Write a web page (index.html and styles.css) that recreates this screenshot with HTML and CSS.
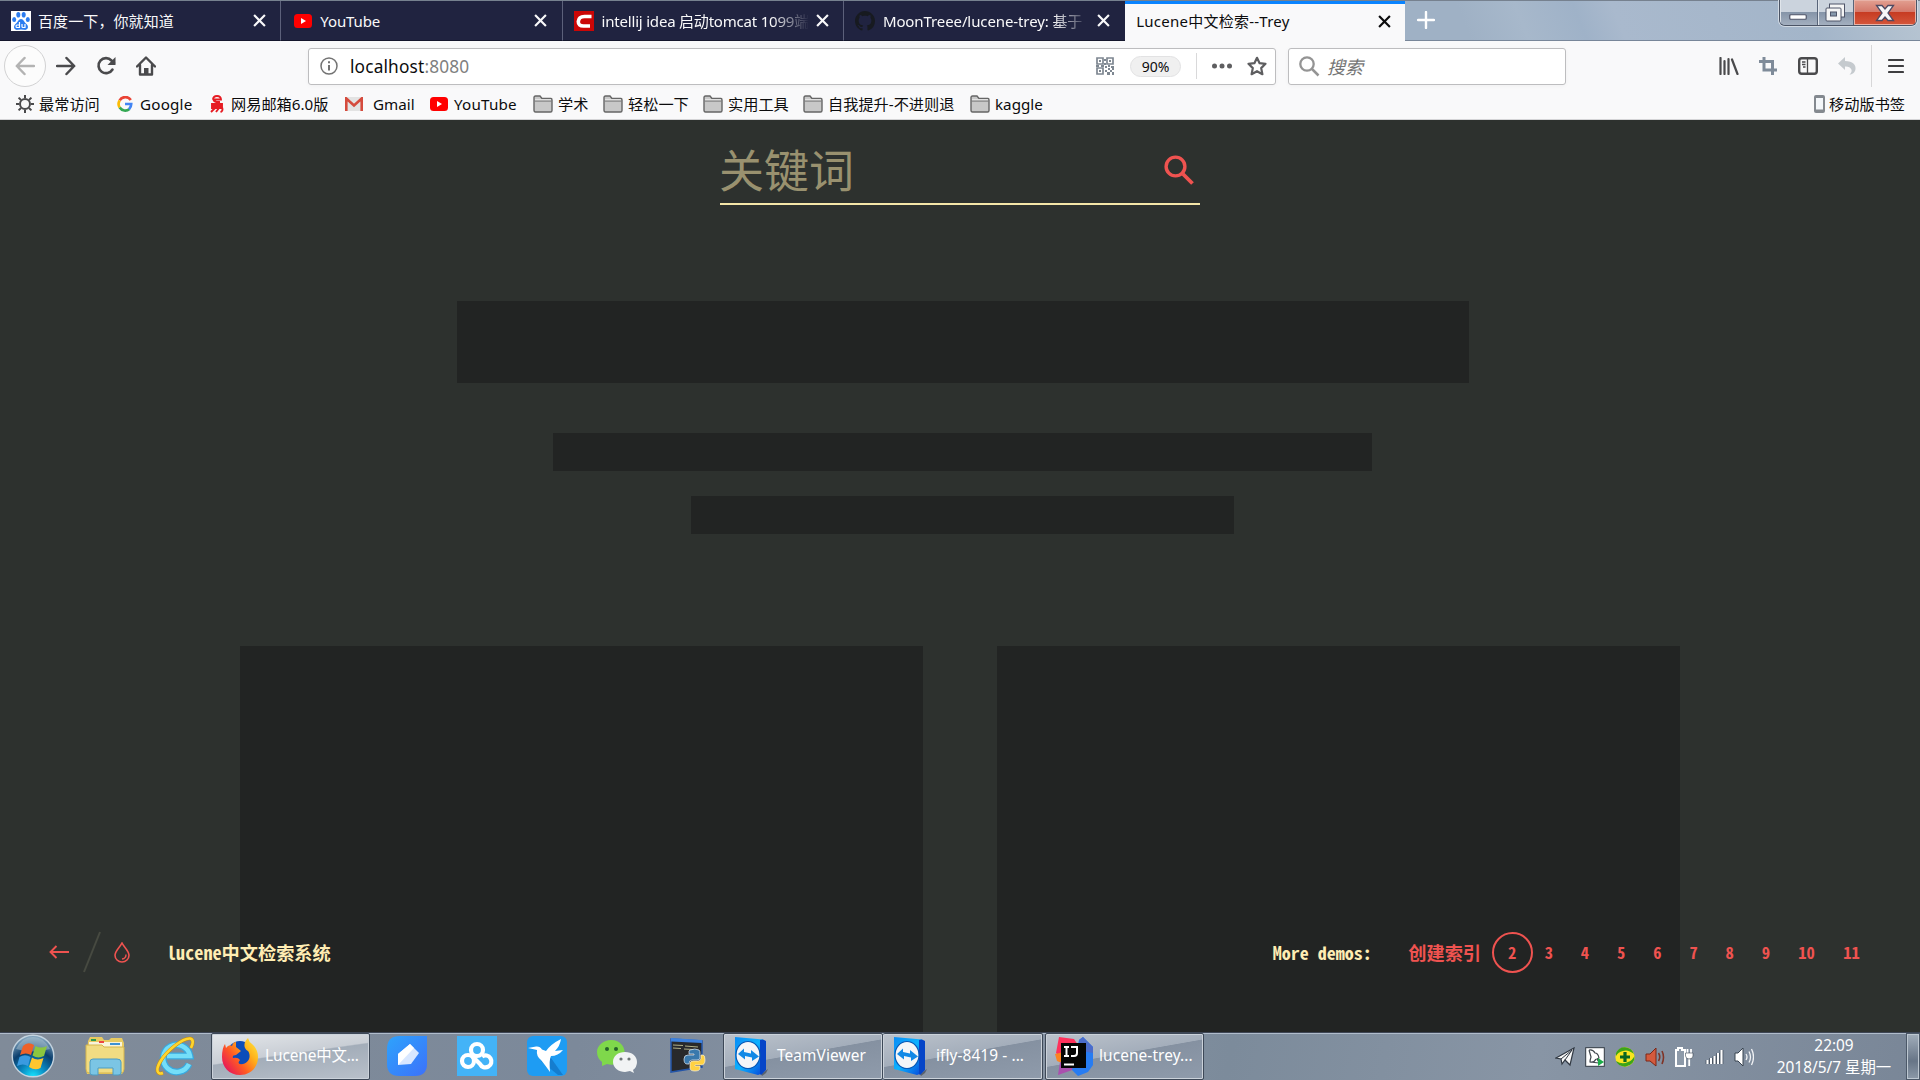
FILE: index.html
```html
<!DOCTYPE html>
<html lang="zh-CN">
<head>
<meta charset="utf-8">
<title>Lucene中文检索--Trey</title>
<link rel="stylesheet" href="styles.css">
</head>
<body>
<svg class="defs" width="0" height="0" aria-hidden="true">
  <defs>
    <symbol id="close" viewBox="0 0 12 12"><path d="M1 1L11 11M11 1L1 11" stroke="currentColor" stroke-width="2" fill="none"/></symbol>
    <symbol id="youtube" viewBox="0 0 18 14"><rect width="18" height="14" rx="3.5" fill="#f00"/><path d="M7 4L12 7L7 10Z" fill="#fff"/></symbol>
    <symbol id="folder" viewBox="0 0 20 18"><path d="M1 15V2.5Q1 1 2.500 1H7L9 3.500H18Q19 3.500 19 5V15.500Q19 17 17.500 17H2.500Q1 17 1 15Z" fill="#c8c8c8" stroke="#666" stroke-width="1.400"/><path d="M1.500 6H18.500" stroke="#777" stroke-width="1.200"/><path d="M2 4.700H18" stroke="#e6e6e6" stroke-width="1.200"/></symbol>
    <linearGradient id="tvSide" x1="0" y1="0" x2="1" y2="1"><stop offset="0" stop-color="#0a8df5"/><stop offset=".5" stop-color="#0cb2ff"/><stop offset="1" stop-color="#0646d8"/></linearGradient>
    <symbol id="teamviewer" viewBox="0 0 36 40"><path d="M27 38L34 33L32 37L28 40Z" fill="#3b4149" opacity=".6"/><path d="M1 1L29 3.500V37L24 39L1 33Z" fill="url(#tvSide)"/><path d="M29 3.500L32 5V34L27 39L26 38V4Z" fill="#0645c8"/><ellipse cx="14" cy="19" rx="12" ry="13.500" fill="#f4f6f8" stroke="#0758b5" stroke-width="1.200"/><path d="M4 18L10 12.500V16L17 17.500V14L25 20.500L18 25V21.500L11 20V23.500Z" fill="#1189e6"/></symbol>
  </defs>
</svg>

<header class="browser">
  <div class="tabstrip">
    <div class="tab first">
      <svg class="favicon" viewBox="0 0 20 20"><rect width="20" height="20" fill="#fff"/><g fill="#2b7cf0"><ellipse cx="7.300" cy="3.800" rx="2" ry="2.800"/><ellipse cx="12.700" cy="3.800" rx="2" ry="2.800"/><ellipse cx="3.200" cy="8.500" rx="2" ry="2.600"/><ellipse cx="16.800" cy="8.500" rx="2" ry="2.600"/><path d="M10 8C7.500 8 7 11 4.500 13C1.500 16 3.500 19.500 7 18.800Q10 18.300 13 18.800C16.500 19.500 18.500 16 15.500 13C13 11 12.500 8 10 8Z"/></g><path d="M8.500 11V16.500H6Q5 16.500 5 15.200Q5 14 6 14H8.500M11 13V15.500Q11 16.500 12 16.500H14V13" stroke="#fff" stroke-width="1.200" fill="none"/></svg>
      <span class="title">百度一下，你就知道</span><svg class="x"><use href="#close"/></svg>
    </div>
    <div class="tab">
      <svg class="favicon yt"><use href="#youtube"/></svg>
      <span class="title">YouTube</span><svg class="x"><use href="#close"/></svg>
    </div>
    <div class="tab">
      <svg class="favicon" viewBox="0 0 20 20"><rect width="20" height="20" fill="#cb0606"/><path d="M17.500 5.500H10.500Q4.700 5.500 4.300 10.500Q4.200 15 9.500 15H16" stroke="#fff" stroke-width="3.600" fill="none"/></svg>
      <span class="title fade csdn">intellij idea 启动tomcat 1099端</span><svg class="x"><use href="#close"/></svg>
    </div>
    <div class="tab">
      <svg class="favicon" viewBox="0 0 16 16"><path fill="#171a20" d="M8 0C3.580 0 0 3.580 0 8c0 3.540 2.290 6.530 5.470 7.590.4.070.55-.17.55-.38 0-.19-.01-.82-.01-1.490-2.010.37-2.530-.49-2.690-.94-.09-.23-.48-.94-.82-1.130-.28-.15-.68-.52-.01-.53.63-.01 1.080.58 1.230.82.720 1.210 1.870.87 2.330.66.070-.52.280-.87.510-1.070-1.780-.2-3.640-.89-3.640-3.950 0-.87.310-1.590.82-2.150-.08-.2-.36-1.020.08-2.120 0 0 .67-.21 2.200.82.640-.18 1.320-.27 2-.27s1.360.09 2 .27c1.530-1.040 2.200-.82 2.200-.82.440 1.100.160 1.920.080 2.120.51.560.82 1.270.82 2.150 0 3.070-1.870 3.750-3.650 3.950.29.250.54.730.54 1.480 0 1.070-.01 1.930-.01 2.200 0 .21.150.46.550.38A8.010 8.010 0 0 0 16 8c0-4.420-3.580-8-8-8z"/></svg>
      <span class="title fade">MoonTreee/lucene-trey: 基于</span><svg class="x"><use href="#close"/></svg>
    </div>
    <div class="tab active"><span class="title">Lucene中文检索--Trey</span><svg class="x"><use href="#close"/></svg></div>
    <svg class="newtab" viewBox="0 0 18 18"><path d="M9 1V17M1 9H17" stroke="#fff" stroke-width="2.400" stroke-linecap="round"/></svg>
    <div class="winbtns">
      <span class="wb min"><svg width="18" height="7"><rect x=".75" y=".75" width="16.500" height="4.500" rx="1" fill="#fff" stroke="#4f5468" stroke-width="1.200"/></svg></span>
      <span class="wb max"><svg width="21" height="19" viewBox="0 0 21 19"><rect x="4.500" y="1" width="15" height="13" fill="#f5f5f5" stroke="#4f5468"/><rect x="1" y="5" width="15" height="13" rx="1" fill="#f5f5f5" stroke="#4f5468"/><rect x="5.500" y="9" width="6" height="4" fill="#8698ab" stroke="#4f5468"/></svg></span>
      <span class="wb cls"><svg width="20" height="18" viewBox="0 0 20 18"><path d="M1.500 1.500H7L10 5L13 1.500H18.500L13 9L18.500 16.500H13L10 13L7 16.500H1.500L7 9Z" fill="#f7f7f7" stroke="#4e4a62" stroke-width="1.300"/></svg></span>
    </div>
  </div>

  <div class="toolbar">
    <span class="back"><svg width="20" height="20" viewBox="0 0 20 20"><path d="M19 10H2M9.500 2L1.800 10L9.500 18" stroke="#b3b3b3" stroke-width="2.500" fill="none" stroke-linecap="round" stroke-linejoin="round"/></svg></span>
    <svg class="nav fwd" viewBox="0 0 20 20"><path d="M1 10H18M10.500 2L18.200 10L10.500 18" stroke="#4a4a4c" stroke-width="2.500" fill="none" stroke-linecap="round" stroke-linejoin="round"/></svg>
    <svg class="nav reload" viewBox="0 0 20 20"><path d="M16.500 13.500A7.500 7.500 0 1 1 15.500 4.500L18 7" stroke="#4a4a4c" stroke-width="2.600" fill="none" stroke-linecap="round"/><path d="M19.500 1V9H11.500Z" fill="#4a4a4c"/></svg>
    <svg class="nav home" viewBox="0 0 20 20"><path d="M1 10.500L10 1.500L19 10.500M4 9V18.500H16V9" stroke="#4a4a4c" stroke-width="2.400" fill="none" stroke-linecap="round" stroke-linejoin="round"/><path d="M8 19V12H12.500V19Z" fill="#4a4a4c"/></svg>
    <div class="urlbar">
      <svg width="18" height="18" viewBox="0 0 18 18"><circle cx="9" cy="9" r="8" fill="none" stroke="#737373" stroke-width="1.500"/><path d="M9 8V13.500M9 4.300V6.300" stroke="#737373" stroke-width="2"/></svg>
      <span class="url">localhost<i>:8080</i></span>
      <svg class="qr" viewBox="0 0 18 18"><path d="M1 1H7V7H1ZM11 1H17V7H11ZM1 11H7V17H1Z" fill="none" stroke="#7e8791" stroke-width="1.700"/><path d="M3 3H5V5H3ZM13 3H15V5H13ZM3 13H5V15H3ZM8 2H10V4H8ZM8 6H10V8H8ZM0 8H3V10H0ZM5 8H8V10H5ZM9 9H11V11H9ZM12 8H14V10H12ZM15 9H18V11H15ZM9 13H11V15H9ZM12 11H14V13H12ZM14 13H16V15H14ZM16 11H18V13H16ZM11 15H14V18H11ZM16 15H18V18H16Z" fill="#7e8791"/></svg>
      <span class="zoom">90%</span><span class="usep"></span>
      <svg class="dots" viewBox="0 0 20 6"><circle cx="2.500" cy="3" r="2.500"/><circle cx="10" cy="3" r="2.500"/><circle cx="17.500" cy="3" r="2.500"/></svg>
      <svg class="star" viewBox="0 0 20 20"><path d="M10 1.800L12.600 7.200L18.500 7.800L14.200 12.100L15.400 18.200L10 15.200L4.600 18.200L5.800 12.100L1.500 7.800L7.400 7.200Z" fill="none" stroke="#5e5e60" stroke-width="2.200" stroke-linejoin="round"/></svg>
    </div>
    <div class="searchbar"><svg width="21" height="21" viewBox="0 0 21 21"><circle cx="8" cy="8" r="6.700" fill="none" stroke="#949494" stroke-width="2.300"/><path d="M13 13L19.500 19.500" stroke="#949494" stroke-width="2.500"/></svg><span>搜索</span></div>
    <div class="tools">
      <svg width="20" height="18" viewBox="0 0 20 18"><path d="M1.500 1V17M5.500 4V17M9.500 2V17M13 2.500L18.500 17" stroke="#4a4a4c" stroke-width="2.200" stroke-linecap="round"/></svg>
      <svg width="18" height="18" viewBox="0 0 18 18"><path d="M5 0V13H18M0 4.500H13.500V18" fill="none" stroke="#7f8b99" stroke-width="3"/></svg>
      <svg width="20" height="18" viewBox="0 0 20 18"><rect x="1.200" y="1.200" width="17.600" height="15.600" rx="2.500" fill="none" stroke="#4a4a4c" stroke-width="2.400"/><path d="M9.500 2V16M4 5H7.500M4 7.500H7.500M5 10H7.500" stroke="#4a4a4c" stroke-width="1.300"/></svg>
      <svg width="18" height="18" viewBox="0 0 18 18"><path d="M0 6.500L7 0V4C15 4 18 8 17.500 12C17 16 14 17.500 11.500 17.500C16 14 13 9 7 9.500V13Z" fill="#c5cace"/></svg>
    </div>
    <span class="tsep"></span>
    <svg class="burger" viewBox="0 0 16 16"><path d="M1 2H15M1 8H15M1 14H15" stroke="#3e3e40" stroke-width="2.200" stroke-linecap="round"/></svg>
  </div>

  <nav class="bookmarks">
    <a style="width:101px"><svg width="18" height="18" viewBox="0 0 18 18"><circle cx="9" cy="9" r="5" fill="none" stroke="#4a4a4c" stroke-width="2"/><path d="M9 0V3M9 15V18M0 9H3M15 9H18M2.600 2.600L5 5M13 13L15.400 15.400M15.400 2.600L13 5M5 13L2.600 15.400" stroke="#4a4a4c" stroke-width="2"/></svg><span>最常访问</span></a>
    <a style="width:92px"><svg width="16" height="16" viewBox="0 0 18 18"><path d="M15.500 4.500A7.300 7.300 0 0 0 3 5" stroke="#ea4335" stroke-width="3" fill="none"/><path d="M3 5A7.500 7.500 0 0 0 3 13" stroke="#fbbc05" stroke-width="3" fill="none"/><path d="M3 13A7.300 7.300 0 0 0 14 14.500" stroke="#34a853" stroke-width="3" fill="none"/><path d="M13.500 14.800Q16 12.500 16 9H9" stroke="#4285f4" stroke-width="3" fill="none"/></svg><span class="google">Google</span></a>
    <a style="width:136px"><svg width="16" height="18" viewBox="0 0 16 18"><path d="M4 4.500Q4 1 8 1Q12 1 12 4.500H4.500Q5 7.500 11 7M3 9H13V13H3ZM3 11H13M6 13L2 17M13 12Q14.500 16 11.500 17M10 13L7 17" fill="none" stroke="#e61c23" stroke-width="1.900"/></svg><span class="mail">网易邮箱6.0版</span></a>
    <a style="width:85px"><svg width="18" height="14" viewBox="0 0 18 14"><rect width="18" height="14" rx="1" fill="#e3e3e3"/><path d="M1.300 14V1.500L9 8.500L16.700 1.500V14" fill="none" stroke="#d54b3d" stroke-width="2.600"/></svg><span class="gm">Gmail</span></a>
    <a style="width:103px"><svg width="18" height="14"><use href="#youtube"/></svg><span class="ytb">YouTube</span></a>
    <a style="width:70px"><svg width="20" height="18"><use href="#folder"/></svg><span>学术</span></a>
    <a style="width:100px"><svg width="20" height="18"><use href="#folder"/></svg><span>轻松一下</span></a>
    <a style="width:100px"><svg width="20" height="18"><use href="#folder"/></svg><span>实用工具</span></a>
    <a style="width:167px"><svg width="20" height="18"><use href="#folder"/></svg><span>自我提升-不进则退</span></a>
    <a><svg width="20" height="18"><use href="#folder"/></svg><span>kaggle</span></a>
    <a class="mobile"><svg width="11" height="18" viewBox="0 0 11 18"><rect width="11" height="18" rx="2" fill="#84898f"/><rect x="2" y="3" width="7" height="11.500" fill="#f4f7fa"/></svg><span>移动版书签</span></a>
  </nav>
</header>

<main class="page">
  <div class="search"><span>关键词</span><svg width="30" height="30" viewBox="0 0 30 30"><circle cx="11.500" cy="11.500" r="9.400" fill="none" stroke="#ef5350" stroke-width="3.400"/><path d="M19 19L28.500 28.500" stroke="#ef5350" stroke-width="3.800"/></svg></div>
  <div class="bar b1"></div>
  <div class="bar b2"></div>
  <div class="bar b3"></div>
  <div class="panels"><div></div><div></div></div>
  <footer class="footer">
    <svg class="arrow" viewBox="0 0 20 14"><path d="M20 7H1.500M7.500 1L1.500 7L7.500 13" fill="none" stroke="#ef5350" stroke-width="1.900"/></svg>
    <svg class="slash" viewBox="0 0 18 42"><path d="M17 1L1 41" stroke="#474a41" stroke-width="2"/></svg>
    <svg class="drop" viewBox="0 0 16 21"><path d="M8 1C6 5 1 9 1 13.200A7 6.800 0 0 0 15 13.200C15 9 10 5 8 1Z" fill="none" stroke="#ef5350" stroke-width="1.600"/><path d="M12 12.500Q12 16.500 8 17" fill="none" stroke="#ef5350" stroke-width="1.400"/></svg>
    <h1>lucene中文检索系统</h1>
    <span class="more">More demos:</span>
    <nav class="demos"><a class="create">创建索引</a><a class="cur">2</a><a>3</a><a>4</a><a>5</a><a>6</a><a>7</a><a>8</a><a>9</a><a class="two">10</a><a class="two">11</a></nav>
  </footer>
</main>

<div class="taskbar">
  <svg class="orb" viewBox="0 0 44 44"><defs><radialGradient id="og" cx=".5" cy="1" r=".95"><stop offset="0" stop-color="#17e5ff"/><stop offset=".35" stop-color="#0a83bc"/><stop offset=".65" stop-color="#0b3f6e"/><stop offset="1" stop-color="#7fa2bb"/></radialGradient></defs><circle cx="22" cy="22" r="20.800" fill="url(#og)" stroke="#c3d3df" stroke-width="1.400"/><path d="M5 15Q11 3 22 3Q33 3 39 15Q22 20 5 15Z" fill="#b9cbd8" opacity=".45"/><path d="M12 12Q17 7 23 11L20 21Q15 18 9 21Z" fill="#ef6228"/><path d="M24.500 12Q30 15 36 12L33 22Q27 25 21.500 21.500Z" fill="#8cc63f"/><path d="M8.500 23Q14 19.500 19.500 23L17 32Q12 29 6 32Z" fill="#3a9ae0"/><path d="M21 23.500Q26 27 32.500 24L29.500 34Q24 37 18 33Z" fill="#fdc62f"/></svg>
  <svg class="explorer" viewBox="0 0 40 40"><path d="M3 5L5 1H17L19 4H24L26 2H37L39 7V35L37 38H2L1 34Z" fill="#e8cb62"/><path d="M4 6H37V12H4Z" fill="#f8f4dc"/><path d="M6 3H11V5H6Z" fill="#2a9a50"/><path d="M14 5H19V7H14Z" fill="#e44"/><path d="M25 7H35V9H25Z" fill="#3e92d5"/><path d="M1 9H17L19 11H39V33Q39 37 36 37H4Q1 37 1 33Z" fill="#f1dc82" stroke="#d6b54c"/><path d="M5 37V26Q5 23 8 23H32Q36 23 36 26V37Q36 39 33 39H28V32H13V39H8Q5 39 5 37Z" fill="#7bc5e4" stroke="#4d9cc3"/></svg>
  <svg class="ie" viewBox="0 0 40 40"><path d="M34 28A13.500 13.500 0 1 1 35 20H12" fill="none" stroke="#38a9df" stroke-width="7"/><path d="M34 28A13.500 13.500 0 1 1 35 20H12" fill="none" stroke="#74def9" stroke-width="4.500"/><path d="M8 37C2 39 .5 34 5 26C12 14 28 2 35 2.500C39 3 38 8 36 12" fill="none" stroke="#c98e08" stroke-width="3.600"/><path d="M8 37C2 39 .5 34 5 26C12 14 28 2 35 2.500C39 3 38 8 36 12" fill="none" stroke="#ffd52e" stroke-width="2.600"/></svg>
  <div class="task on">
    <svg width="38" height="38" viewBox="0 0 38 38"><defs><linearGradient id="fx" x1="1" y1="0" x2="0" y2=".8"><stop offset="0" stop-color="#fff044"/><stop offset=".35" stop-color="#ffb01b"/><stop offset=".65" stop-color="#ff5a24"/><stop offset="1" stop-color="#e3105f"/></linearGradient></defs><circle cx="19" cy="17" r="13" fill="#0d4dba"/><path d="M4 7L5 11Q8 7 11 9Q12 5 15 5L15 10L20 14L15 18Q11 18 12 21Q17 20 19 23Q15 28 22 27C29 25 30 18 27 14Q22 11 24 5Q25 3 27 1Q28 5 31 7Q37 12 37 20C37 31 29 38 19 38C8 38 1 30 1 20Q1 11 4 7Z" fill="url(#fx)"/></svg>
    <span>Lucene中文...</span>
  </div>
  <svg class="app a1" viewBox="0 0 40 40"><defs><linearGradient id="bl" x1="0" y1="0" x2="1" y2="1"><stop offset="0" stop-color="#2ea3fc"/><stop offset="1" stop-color="#3c71fa"/></linearGradient></defs><path d="M13 0H40V28Q40 40 28 40H12Q0 40 0 28V13Q0 0 13 0Z" fill="url(#bl)"/><path d="M11 29V18L23 8L32 17L24 28Z" fill="#d8e7ff"/><path d="M11 29V18L23 8L27 12Z" fill="#fff"/></svg>
  <svg class="app" viewBox="0 0 40 40"><rect width="40" height="40" fill="#43b3f7"/><g fill="none" stroke="#fff" stroke-width="4.200"><circle cx="20" cy="14" r="6"/><circle cx="11" cy="25" r="6"/><path d="M15 20L23 28A6 6 0 1 0 25 20.500"/></g></svg>
  <svg class="app" viewBox="0 0 40 40"><rect width="40" height="40" rx="6" fill="#1e9cf3"/><path d="M14 25L31 39H36L24 22Z" fill="#157dcf"/><path d="M1 12L9 10.500Q13 10 15 13.500L19 15Q24 8 34 3Q33 10 28 15L36 14Q31 20 24 20Q22 23 23 36Q18 29 14 24Q9 20 10 14Z" fill="#fff"/></svg>
  <svg class="app" viewBox="0 0 40 40"><path d="M14 4C7 4 0 9 0 16Q0 22 5 26L5 30L10 28Q16 30 21 27C29 23 29 14 25 9Q21 4 14 4Z" fill="#7fd84b"/><path d="M28 16C21 16 16 20 16 26C16 32 22 36 28 36L33 35L37 37L36 34Q40 31 40 26C40 20 35 16 28 16Z" fill="#f1f3f4"/><g fill="#25632a"><circle cx="10" cy="13" r="2"/><circle cx="19" cy="13" r="2"/></g><g fill="#6c7476"><circle cx="24" cy="23" r="1.600"/><circle cx="32" cy="23" r="1.600"/></g></svg>
  <svg class="app py" viewBox="0 0 40 40"><path d="M4 3L35 5V31L4 36Z" fill="#28292b" stroke="#2455a8" stroke-width="1.500"/><path d="M4 2L35 4V7L4 5.500Z" fill="#3d82df"/><path d="M6 9L16 9.500M18 10L31 11M6 12L14 12.500M17 13L27 13.500" stroke="#b1b087" stroke-width="1"/><path d="M23 14Q28 12 32 14Q33 15 33 17V22Q33 24 30 24H25Q22 24 22 28H20Q17 28 17 23Q17 19 21 19H27V18H22V15Z" fill="#3978ac" stroke="#e6edf3" stroke-width=".7"/><path d="M34 19H36Q38 19 38 24Q38 29 34 29H28V30H33V32Q33 35 28 35Q23 35 23 32V28Q23 25 26 25H31Q34 25 34 22Z" fill="#ffd142" stroke="#f6f0dc" stroke-width=".7"/></svg>
  <div class="task tv"><svg width="36" height="40"><use href="#teamviewer"/></svg><span>TeamViewer</span></div>
  <div class="task tv second"><svg width="36" height="40"><use href="#teamviewer"/></svg><span>ifly-8419 - ...</span></div>
  <div class="task ij"><svg width="40" height="40" viewBox="0 0 40 40"><path d="M5 1L20 3L26 12L13 27L2 17Z" fill="#ff315c"/><path d="M1 18L10 16V28L3 25Z" fill="#fb8422"/><path d="M6 26L21 33L4 39Z" fill="#aa4fae"/><path d="M25 4L29 1L39 11V29L34 36L24 40L18 34Z" fill="#277cf2"/><path d="M25 4L29 1L39 11V17L28 15Z" fill="#4b6ccb"/><rect x="7" y="7" width="25" height="25" fill="#050505"/><path d="M10 11H15M12.500 11V20M10 20H15M17 11H23V17Q23 20 20 20H17M10 28.500H20" fill="none" stroke="#fff" stroke-width="2"/></svg><span>lucene-trey...</span></div>
  <div class="tray">
    <svg viewBox="0 0 20 20"><path d="M1 11L19 1L15 18L10 13L7 17L6 12Z" fill="#f7f7f7" stroke="#303842" stroke-width="1.200"/><path d="M6 12L17 3L10 13" fill="none" stroke="#303842"/></svg>
    <svg viewBox="0 0 20 20"><rect x=".7" y=".7" width="18.600" height="18.600" fill="#fff" stroke="#303842"/><path d="M4 3Q8 2 10 6Q13 6 14 11L12 12L15 17M4 3L6 10Q5 13 5 15Q9 16 11 12M5 15L14 16" fill="none" stroke="#40464d" stroke-width="1.200"/><path d="M13 11L19 15L13 19Z" fill="#1cac47"/></svg>
    <svg viewBox="0 0 20 20"><circle cx="10" cy="10" r="9.700" fill="#f9e51f"/><path d="M1 6Q4 0 10 .3Q17 1 19 7Q13 2 8 4Q3 5 1 9ZM1 14Q7 18 13 15Q17 14 19.500 9Q20 18 10 19.700Q3 19 1 14Z" fill="#3ca419"/><path d="M10 5V15M5 10H15" stroke="#086622" stroke-width="3.200"/></svg>
    <svg viewBox="0 0 20 20"><path d="M1 7H5L11 1V19L5 14H1Z" fill="#d45a3d" stroke="#7d2616"/><path d="M13.500 6Q16 10 13.500 14M17 4Q20 10 17 17" fill="none" stroke="#803426" stroke-width="1.600"/></svg>
    <svg viewBox="0 0 20 20"><path d="M2 3H4V1H8V3H11V19H2Z" fill="#8d9aa9" stroke="#fff" stroke-width="2"/><path d="M13.500 2V6M17 2V6M15.200 12V19" stroke="#fff" stroke-width="1.800"/><path d="M11.500 6H19V9Q19 12 15 12Q12 12 11.500 9Z" fill="#fff" stroke="#394451" stroke-width=".6"/></svg>
    <svg viewBox="0 0 20 20"><path d="M3.500 13V17M7 11V17M10.500 9V17M14 6V17M17.500 3V17" stroke="#374352" stroke-width="3.600"/><path d="M3.500 13V17M7 11V17M10.500 9V17M14 6V17M17.500 3V17" stroke="#fff" stroke-width="2.200"/></svg>
    <svg viewBox="0 0 20 20"><path d="M1 6H4L9 1V19L4 14H1Z" fill="#fff" stroke="#394451"/><path d="M12 7Q14 10 12 13M15 4.500Q18 10 15 15.500M17.500 2Q21.500 10 17.500 18" fill="none" stroke="#f1f3f5" stroke-width="1.300"/></svg>
  </div>
  <div class="clock"><span>22:09</span><span>2018/5/7 星期一</span></div>
  <div class="desk"></div>
</div>
</body>
</html>
```
FILE: styles.css
```css
* { box-sizing: border-box; }
body { margin: 0; width: 1920px; height: 1080px; overflow: hidden; display: flex; flex-direction: column; font: 15px/20px "Noto Sans", "Noto Sans CJK SC", sans-serif; color: #0c0c0d; }
svg { flex: none; display: block; }
.defs { position: absolute; }
span { white-space: nowrap; }

.browser { height: 120px; flex: none; background: #f9f9fa; border-bottom: 1px solid #d4d4d6; }
.tabstrip { height: 41px; display: flex; border-top: 1px solid #76818f; background: linear-gradient(68deg, #9fb1c5 0 76%, #a7b8cb 79%, #9fb2c8 82%, #a9b9cd 84%, #a3b5c9 94%, #b7c5d2); box-shadow: inset 0 -1px #788699; }
.tab { width: 281.300px; flex: none; display: flex; align-items: center; padding: 0 15px 0 11px; background: #202340; color: #f9f9fa; border-right: 1px solid #5c607a; border-bottom: 1px solid #14162c; }
.tab.first { padding-right: 14px; }
.tab:nth-child(4) { border-right: 0; }
.tab.active { background: #f9f9fa; color: #0c0c0d; border: 0; border-top: 3px solid #0a84ff; padding-bottom: 3px; padding-right: 14px; width: 280px; }
.favicon { width: 20px; height: 20px; margin-right: 8px; }
.favicon.yt { width: 18px; height: 14px; margin-left: 2px; }
.title { flex: 1; letter-spacing: -.1px; }
.first .title { letter-spacing: .1px; margin-left: -1px; }
.active .title { letter-spacing: .25px; }
.fade { mask-image: linear-gradient(90deg, #000 82%, transparent 100%); margin-right: 7px; }
.csdn { letter-spacing: -.2px; }
.x { width: 13px; height: 13px; }
.newtab { width: 18px; height: 18px; margin: 10px 0 0 12px; }
.winbtns { display: flex; margin: -1px 3px 0 auto; width: 138px; height: 26px; border: 1px solid #4b5465; border-top: 0; border-radius: 0 0 6px 6px; overflow: hidden; box-shadow: 0 0 0 1px #d2dae3; }
.wb { display: flex; align-items: center; justify-content: center; background: linear-gradient(#cbd3dd 0 46%, #8493a7 47%, #a3afbf); border-right: 1px solid #59657a; box-shadow: inset 1px 0 #e0e5eb; }
.min { width: 38px; padding-top: 10px; padding-right: 2px; }
.max { width: 36px; padding-right: 1px; }
.cls { flex: 1; border: 0; background: linear-gradient(#e2a091, #d4796b 46%, #c63a21 47%, #d5573c); box-shadow: inset 0 0 0 1px #e8b2a7; }

.toolbar { height: 50px; display: flex; align-items: center; }
.back { width: 42px; height: 42px; margin-left: 4px; border: 1px solid #d2d2d3; border-radius: 50%; display: flex; align-items: center; justify-content: center; background: #fcfcfc; }
.nav { width: 20px; height: 20px; }
.fwd { margin-left: 10px; }
.reload { margin-left: 20px; }
.home { margin-left: 20px; }
.urlbar, .searchbar { height: 37px; background: #fff; border: 1px solid #bdbdbf; border-radius: 3px; display: flex; align-items: center; box-shadow: 0 1px 4px #0000000a; }
.urlbar { width: 968px; margin-left: 152px; padding: 0 8px 0 11px; }
.url { font-size: 17.300px; margin-left: 12px; padding-top: 1px; letter-spacing: .15px; }
.url i { font-style: normal; color: #808080; }
.qr { width: 18px; height: 18px; margin-left: auto; }
.zoom { width: 51px; height: 21px; border-radius: 11px; background: #f0f0f0; border: 1px solid #e2e2e3; font-size: 14px; line-height: 19px; text-align: center; margin-left: 16px; }
.usep { width: 1px; height: 26px; background: #d9d9da; margin: 0 15px; }
.dots { width: 20px; height: 6px; fill: #5e5e60; }
.star { width: 20px; height: 20px; margin-left: 15px; }
.searchbar { width: 278px; margin-left: 12px; padding-left: 10px; font-size: 18px; font-style: italic; color: #757575; }
.searchbar span { margin-left: 7px; padding-top: 1px; }
.tools { display: flex; align-items: center; gap: 20.500px; margin-left: 152.500px; }
.tsep { width: 1px; height: 42px; background: #d7d7d8; margin-left: 15px; }
.burger { width: 16px; height: 16px; margin-left: 16px; }

.bookmarks { height: 28px; display: flex; align-items: center; padding: 0 15px 2px 16px; font-size: 15.200px; }
.bookmarks a { display: flex; align-items: center; flex: none; }
.bookmarks span { margin-left: 5px; }
.bookmarks .google, .bookmarks .mail { margin-left: 7px; letter-spacing: .2px; }
.bookmarks .mail { margin-left: 6px; letter-spacing: 0; }
.bookmarks .gm { margin-left: 10px; }
.bookmarks .ytb { margin-left: 6px; letter-spacing: .2px; }
.bookmarks .mobile { margin-left: auto; }
.bookmarks .mobile span { margin-left: 4px; }

.page { height: 912px; flex: none; position: relative; background: #2d312e; display: flex; flex-direction: column; align-items: center; overflow: hidden; }
.search { width: 480px; height: 85px; border-bottom: 2px solid #f4e6a8; display: flex; align-items: center; justify-content: space-between; padding: 17px 6px 0 0; font-size: 45px; line-height: 60px; font-weight: 400; color: #99916f; }
.search span { padding-top: 2px; margin-left: -1px; }
.bar { background: #222423; flex: none; }
.b1 { width: 1012px; height: 81.500px; margin: 96px 0 0 6px; }
.b2 { width: 819px; height: 38px; margin: 50px 0 0 5px; }
.b3 { width: 543px; height: 38px; margin: 25px 0 0 5px; }
.panels { width: 1440px; flex: 1; margin-top: 112.500px; display: flex; justify-content: space-between; }
.panels div { width: 683px; background: #222423; }
.footer { position: absolute; left: 0; right: 0; bottom: 59px; height: 42px; display: flex; align-items: center; padding: 0 46px 0 48.500px; }
.arrow { width: 20px; height: 14px; }
.slash { width: 18px; height: 42px; margin-left: 14px; }
.drop { width: 16px; height: 21px; margin-left: 13.500px; }
h1 { margin: 0 0 0 37px; font: 700 18.200px/24px "Noto Sans Mono CJK SC", "Noto Sans CJK SC", monospace; color: #ffedb3; }
.more { margin-left: auto; font: 700 18px/24px "Noto Sans Mono CJK SC", "Noto Sans CJK SC", monospace; color: #ffedb3; }
.demos { display: flex; align-items: center; margin-left: 36px; font: 700 16.500px/24px "Noto Sans Mono CJK SC", "Noto Sans CJK SC", monospace; color: #ef5350; }
.demos a { width: 36.200px; text-align: center; }
.demos .create { width: 74px; font-size: 18.200px; }
.demos .cur { width: 41px; height: 41px; line-height: 37px; border: 2px solid #ef5350; border-radius: 50%; margin: 0 -2px 0 10px; }
.demos .two { width: 45px; }

.taskbar { height: 48px; flex: none; display: flex; align-items: center; border-top: 1px solid #3e4655; box-shadow: inset 0 1px #b0bccb; background: linear-gradient(100deg, #808b99, #7c899a 30%, #8894a4 50%, #7c8b9b 64%, #8895a5 80%, #798697); color: #fff; font-size: 15.400px; }
.taskbar > svg { margin-bottom: 1px; }
.orb { width: 44px; height: 44px; margin-left: 11px; }
.explorer { width: 40px; height: 40px; margin-left: 30px; }
.ie { width: 40px; height: 40px; margin-left: 30px; }
.task { width: 159px; height: 47px; flex: none; display: flex; align-items: center; padding-bottom: 2px; border: 1px solid #3d4857; border-radius: 2px; box-shadow: inset 0 0 0 1px #cbd2da; background: linear-gradient(170deg, #bcc3cc 0, #a4aebb 45%, #8591a1 46%, #8f9bab); }
.on { margin-left: 16px; padding-left: 9px; background: linear-gradient(172deg, #e4e7ea, #c9ced5 45%, #a3adb9 47%, #b8c0ca); }
.on span { margin-left: 6px; letter-spacing: -.1px; }
.app { width: 40px; height: 40px; margin-left: 30px; }
.a1 { margin-left: 17px; }
.tv { margin-left: 16px; padding-left: 10px; width: 160px; }
.tv span { margin-left: 7px; letter-spacing: .1px; }
.second { margin-left: 0; border-left: 0; }
.ij { margin-left: 2px; padding-left: 8px; width: 159px; }
.ij span { margin-left: 5px; letter-spacing: .1px; }
.tray { display: flex; gap: 9.800px; margin-left: auto; }
.tray svg { width: 20px; height: 20px; }
.clock { width: 144px; display: flex; flex-direction: column; align-items: center; line-height: 22px; margin-left: 8px; }
.desk { width: 14px; height: 47px; border: 1px solid #4b5868; box-shadow: inset 0 0 0 1px #bdc7d1; background: linear-gradient(#a2aebb, #677587 60%, #8c99a8); }
```
